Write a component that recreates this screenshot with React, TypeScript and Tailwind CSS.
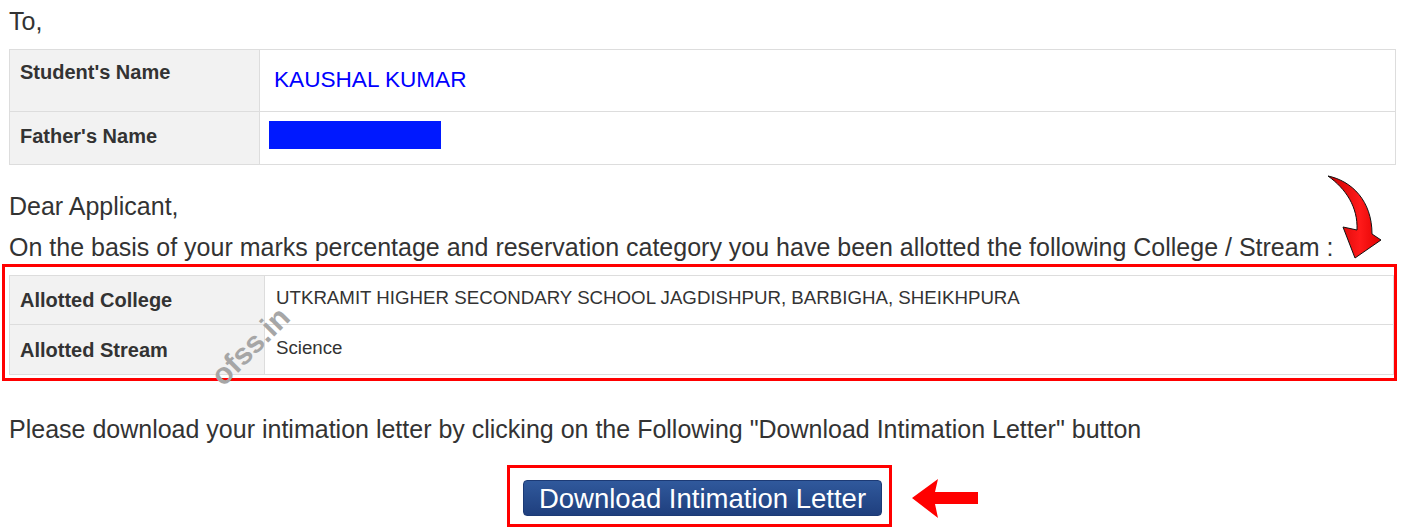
import React from 'react';

const font = "font-['Liberation_Sans',Arial,sans-serif]";

function CurvedArrow() {
  return (
    <svg width="90" height="100" viewBox="0 0 90 100" className="absolute left-[1310px] top-[165px]">
      <defs>
        <linearGradient id="ca" x1="0" y1="0" x2="1" y2="0">
          <stop offset="0" stopColor="#c80000" />
          <stop offset="0.6" stopColor="#ff1a1a" />
          <stop offset="1" stopColor="#e00000" />
        </linearGradient>
      </defs>
      <path
        d="M18,11 C42,16 62,36 62,69 L71,75 L45,93 L33,62 L47,65 C48,42 36,24 18,11 Z"
        fill="url(#ca)"
        stroke="#111"
        strokeWidth="1"
        strokeLinejoin="round"
      />
    </svg>
  );
}

function LeftArrow() {
  return (
    <svg width="80" height="50" viewBox="0 0 80 50" className="absolute left-[905px] top-[474px]">
      <path d="M7,24 L33,5 L30,18 L73,18 L73,30 L30,30 L33,44 Z" fill="#ff0000" />
    </svg>
  );
}

export default function App() {
  return (
    <div className={`relative w-[1405px] h-[530px] overflow-hidden bg-white px-[9px] pt-[4px] text-[#333] ${font}`}>
      <p className="text-[25px] leading-[34px]">To,</p>

      <div className="mt-[11px] border border-[#ddd]">
        <div className="flex h-[62px] border-b border-[#ddd]">
          <div className="w-[250px] shrink-0 border-r border-[#ddd] bg-[#f2f2f2] pl-[10px] pt-[8px] text-[20px] font-bold leading-[28px] text-[#333]">
            Student's Name
          </div>
          <div className="flex-1 pl-[14px] pt-[15px] text-[22.6px] leading-[30px] text-[#0000ff]">KAUSHAL KUMAR</div>
        </div>
        <div className="flex h-[52px]">
          <div className="w-[250px] shrink-0 border-r border-[#ddd] bg-[#f2f2f2] pl-[10px] pt-[10px] text-[20px] font-bold leading-[28px] text-[#333]">
            Father's Name
          </div>
          <div className="flex-1 pl-[9px] pt-[9px]">
            <div className="h-[28px] w-[172px] bg-[#0019ff]" />
          </div>
        </div>
      </div>

      <p className="mt-[24px] text-[25px] leading-[34px]">Dear Applicant,</p>
      <p className="mt-[7px] text-[25px] leading-[34px]">
        On the basis of your marks percentage and reservation category you have been allotted the following College / Stream :
      </p>

      <div className="ml-[-7px] mr-[-1px] mt-[0px] border-[3px] border-[#ff0000] pl-[4px] pt-[8px] pb-[3px]">
        <div className="border border-[#ddd]">
          <div className="flex h-[49px] border-b border-[#ddd]">
            <div className="flex w-[255px] shrink-0 items-center border-r border-[#ddd] bg-[#f2f2f2] pl-[10px] text-[20px] font-bold text-[#333]">
              Allotted College
            </div>
            <div className="flex flex-1 items-center pl-[11px] pb-[3px] text-[18.7px] text-[#333]">
              UTKRAMIT HIGHER SECONDARY SCHOOL JAGDISHPUR, BARBIGHA, SHEIKHPURA
            </div>
          </div>
          <div className="flex h-[49px]">
            <div className="flex w-[255px] shrink-0 items-center border-r border-[#ddd] bg-[#f2f2f2] pl-[10px] text-[20px] font-bold text-[#333]">
              Allotted Stream
            </div>
            <div className="flex flex-1 items-center pl-[11px] pb-[3px] text-[18.7px] text-[#333]">Science</div>
          </div>
        </div>
      </div>

      <p className="mt-[31px] text-[25px] leading-[34px]">
        Please download your intimation letter by clicking on the Following "Download Intimation Letter" button
      </p>

      <div className="mt-[19px] flex">
        <div className="ml-[498px] border-[3px] border-[#ff0000] pl-[13px] pr-[7px] pt-[12px] pb-[8px]">
          <button className="flex h-[36px] w-[359px] items-center justify-center rounded-[4px] border border-[#1c3a75] bg-gradient-to-b from-[#30599c] to-[#1f3f7e] pt-[2px] text-[27.5px] leading-[34px] text-white">
            Download Intimation Letter
          </button>
        </div>
      </div>

      <CurvedArrow />
      <LeftArrow />
      <div className="absolute left-[250px] top-[346px] -translate-x-1/2 -translate-y-1/2 -rotate-45 text-[30px] font-bold text-[#a6a6a6]">
        ofss.in
      </div>
    </div>
  );
}
